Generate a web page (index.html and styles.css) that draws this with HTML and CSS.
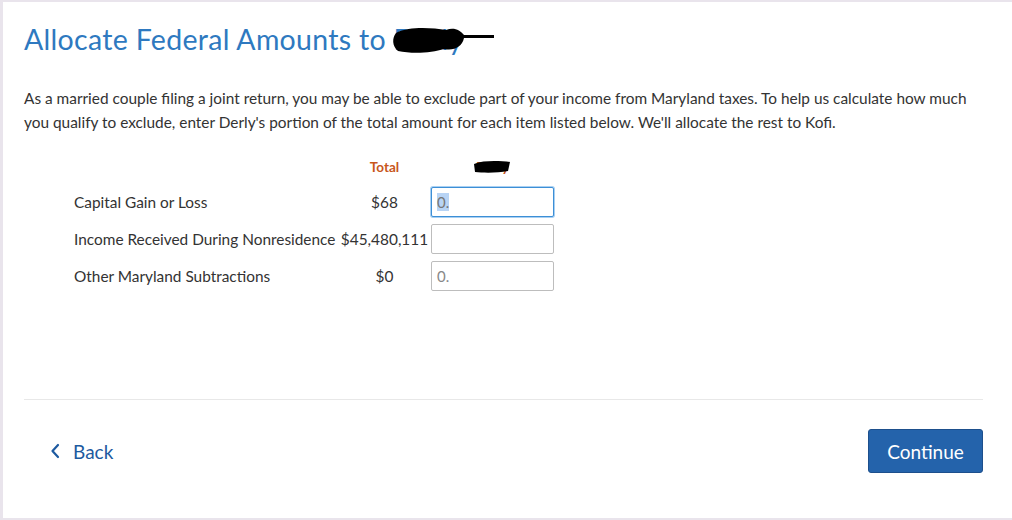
FILE: index.html
```html
<!DOCTYPE html>
<html>
<head>
<meta charset="utf-8">
<link rel="stylesheet" href="styles.css">
</head>
<body>
<div class="page">
  <h1 class="title">Allocate Federal Amounts to <span class="redacted">Derly<svg class="scribble" width="106" height="34" viewBox="0 0 106 34"><path d="M4 9 C18 2 40 4 54 6 C62 3 68 6 72 11 L102 11 L102 14 L72 14 C70 23 62 27 52 25 C40 29 20 30 6 27 C0 22 0 14 4 9 Z" fill="#000"/></svg></span></h1>
  <p class="intro">As a married couple filing a joint return, you may be able to exclude part of your income from Maryland taxes. To help us calculate how much you qualify to exclude, enter Derly's portion of the total amount for each item listed below. We'll allocate the rest to Kofi.</p>
  <div class="table">
    <div class="row header">
      <div class="label"></div>
      <div class="head">Total</div>
      <div class="head head-name"><span class="redacted">Derly<svg class="scribble2" width="40" height="14" viewBox="0 0 40 14"><path d="M2 4 C12 0 28 1 38 2 L36 11 C26 13 12 13 3 12 Z" fill="#000"/></svg></span></div>
    </div>
    <div class="row">
      <div class="label">Capital Gain or Loss</div>
      <div class="amt">$68</div>
      <div class="field focus"><span class="sel">0.</span></div>
    </div>
    <div class="row">
      <div class="label">Income Received During Nonresidence</div>
      <div class="amt">$45,480,111</div>
      <div class="field"></div>
    </div>
    <div class="row">
      <div class="label">Other Maryland Subtractions</div>
      <div class="amt">$0</div>
      <div class="field"><span class="ph">0.</span></div>
    </div>
  </div>
  <div class="spacer"></div>
  <hr class="divider">
  <div class="footer">
    <a class="back"><svg width="10" height="16" viewBox="0 0 10 16"><path d="M8 2 L2.5 8 L8 14" fill="none" stroke="#1d5aa0" stroke-width="2.2" stroke-linecap="round" stroke-linejoin="round"/></svg>Back</a>
    <button class="continue">Continue</button>
  </div>
</div>
</body>
</html>
```
FILE: styles.css
```css
html, body { margin: 0; padding: 0; }
body {
  width: 1012px;
  height: 520px;
  background: #e9e4ec;
  font-family: Lato, "Open Sans", sans-serif;
  overflow: hidden;
}
.page {
  margin: 2px 0 2px 3px;
  height: 516px;
  background: #fff;
  padding: 0 29px 0 21px;
  display: flex;
  flex-direction: column;
  box-sizing: border-box;
}
.title {
  margin: 18px 0 0 0;
  font-weight: 400;
  font-size: 28.5px;
  line-height: 38px;
  color: #2e79c0;
  letter-spacing: 0.3px;
  white-space: nowrap;
}
.redacted { position: relative; display: inline-block; }
.scribble { position: absolute; left: -2px; top: 4px; }
.scribble2 { position: absolute; left: -4px; top: 1px; }
.intro {
  margin: 28px 0 0 0;
  font-size: 15.4px;
  line-height: 24px;
  color: #333;
}
.table {
  margin-top: 25px;
  padding-left: 50px;
  display: flex;
  flex-direction: column;
  gap: 7px;
}
.row {
  display: flex;
  align-items: center;
  height: 30px;
}
.row.header { height: 18px; margin-bottom: 3px; align-items: flex-start; }
.label {
  width: 264px;
  font-size: 15.4px;
  color: #333;
  white-space: nowrap;
}
.amt {
  width: 93px;
  font-size: 15.4px;
  color: #333;
  text-align: center;
  white-space: nowrap;
}
.head {
  width: 93px;
  font-size: 13.5px;
  font-weight: 700;
  color: #c8561b;
  text-align: center;
}
.head.head-name { width: 123px; }
.field {
  width: 123px;
  height: 30px;
  box-sizing: border-box;
  border: 1px solid #bdbdbd;
  border-radius: 2px;
  background: #fff;
  font-size: 15px;
  color: #888;
  padding: 0 5px;
  display: flex;
  align-items: center;
}
.field.focus {
  border: 1px solid #3d8fd6;
  box-shadow: 0 0 0 1px #a9d0f2;
}
.sel { background: #b8d4f5; color: #777; line-height: 18px; }
.ph { color: #888; }
.spacer { flex: 1; }
.divider {
  border: 0;
  border-top: 1px solid #e8e8e8;
  margin: 0;
}
.footer {
  height: 118px;
  display: flex;
  align-items: center;
  justify-content: space-between;
  padding-bottom: 16px;
  box-sizing: border-box;
}
.back {
  margin-left: 26px;
  display: flex;
  align-items: center;
  gap: 13px;
  color: #1d5aa0;
  font-size: 19px;
  font-weight: 400;
}
.continue {
  width: 115px;
  height: 44px;
  background: #2463ab;
  color: #fff;
  border: 1px solid #1d4f8c;
  border-radius: 3px;
  font-family: Lato, "Open Sans", sans-serif;
  font-size: 19px;
}
```
